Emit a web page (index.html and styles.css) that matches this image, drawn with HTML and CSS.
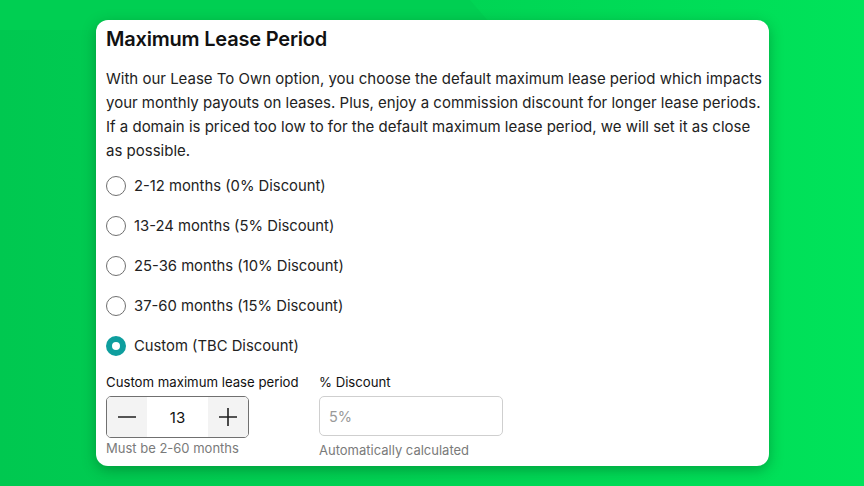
FILE: index.html
```html
<!DOCTYPE html>
<html>
<head>
<meta charset="utf-8">
<link rel="stylesheet" href="styles.css">
</head>
<body>
<div class="stage">
  <div class="shape"></div>
  <div class="card">
    <h1 class="title">Maximum Lease Period</h1>
    <p class="desc">With our Lease To Own option, you choose the default maximum lease period which impacts your monthly payouts on leases. Plus, enjoy a commission discount for longer lease periods. If a domain is priced too low to for the default maximum lease period, we will set it as close as possible.</p>
    <div class="options">
      <label class="opt"><span class="radio"></span><span>2-12 months (0% Discount)</span></label>
      <label class="opt"><span class="radio"></span><span>13-24 months (5% Discount)</span></label>
      <label class="opt"><span class="radio"></span><span>25-36 months (10% Discount)</span></label>
      <label class="opt"><span class="radio"></span><span>37-60 months (15% Discount)</span></label>
      <label class="opt"><span class="radio checked"></span><span>Custom (TBC Discount)</span></label>
    </div>
    <div class="fields">
      <div class="field">
        <div class="flabel">Custom maximum lease period</div>
        <div class="stepper">
          <span class="step"><svg width="20" height="20" viewBox="0 0 20 20"><path d="M1 10H19" stroke="#1f1f1f" stroke-width="1.6"/></svg></span>
          <span class="val">13</span>
          <span class="step"><svg width="20" height="20" viewBox="0 0 20 20"><path d="M1 10H19M10 1V19" stroke="#1f1f1f" stroke-width="1.6"/></svg></span>
        </div>
        <div class="hint">Must be 2-60 months</div>
      </div>
      <div class="field">
        <div class="flabel">% Discount</div>
        <div class="input">5%</div>
        <div class="hint hint2">Automatically calculated</div>
      </div>
    </div>
  </div>
</div>
</body>
</html>
```
FILE: styles.css
```css
* { box-sizing: border-box; }
html, body { margin: 0; padding: 0; }
body { width: 864px; height: 486px; overflow: hidden; font-family: Inter, "Noto Sans", sans-serif; }
.stage {
  position: relative;
  width: 864px; height: 486px;
  background: linear-gradient(90deg, #00c850 0%, #00d253 45%, #00e35a 100%);
  padding: 20px 0 0 96px;
}
.shape {
  position: absolute; left: 0; top: 0; width: 500px; height: 30px;
  background: #00cf52;
  clip-path: polygon(0 0, 470px 0, 496px 30px, 0 30px);
}
.card {
  position: relative;
  width: 673px; height: 446px;
  background: #fff;
  border-radius: 12px;
  box-shadow: 0 4px 14px rgba(0,60,20,0.35);
  padding: 6px 4px 0 10px;
  color: #111;
}
.title { margin: 0; font-size: 20px; font-weight: 600; line-height: 26px; letter-spacing: -0.2px; color: #111; }
.desc { margin: 15px 0 0; font-size: 15px; line-height: 24px; color: #222; }
.options { display: flex; flex-direction: column; gap: 16px; margin-top: 11px; }
.opt { display: flex; align-items: center; gap: 8px; height: 24px; font-size: 14.8px; color: #222; }
.radio { width: 20px; height: 20px; border-radius: 50%; border: 1px solid #6f6f6f; flex: none; }
.radio.checked { border: 6px solid #0e9e9e; background: #fff; }
.fields { display: flex; gap: 20px; margin-top: 15px; }
.field:first-child { width: 193px; }
.flabel { font-size: 13.2px; line-height: 18px; color: #111; margin-bottom: 5px; white-space: nowrap; }
.stepper { display: flex; width: 143px; height: 42px; border: 1px solid #707070; border-radius: 5px; overflow: hidden; }
.step { width: 40px; background: #f3f3f3; display: flex; align-items: center; justify-content: center; }
.val { flex: 1; display: flex; align-items: center; justify-content: center; font-size: 15px; color: #111; }
.input { width: 184px; height: 40px; border: 1px solid #cfcfcf; border-radius: 5px; font-size: 14.5px; color: #9a9a9a; display: flex; align-items: center; padding-left: 9px; }
.hint { font-size: 13px; line-height: 18px; color: #7a7a7a; margin-top: 1px; }
.hint2 { margin-top: 5px; }
```
